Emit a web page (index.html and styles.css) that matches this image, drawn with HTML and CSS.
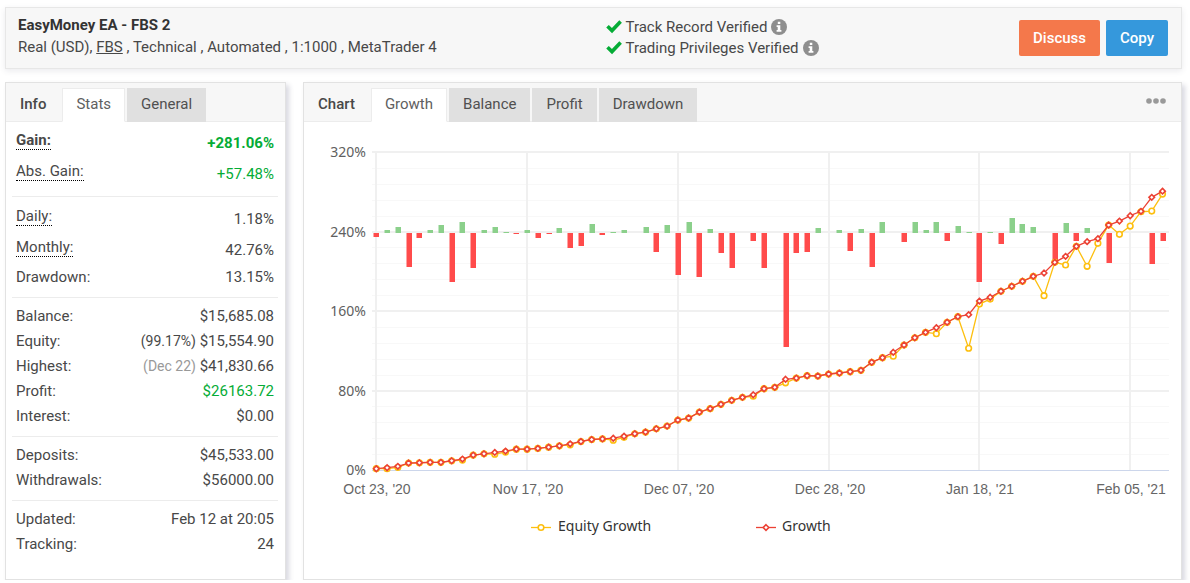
FILE: index.html
```html
<!DOCTYPE html>
<html lang="en">
<head>
<meta charset="utf-8">
<meta name="viewport" content="width=device-width, initial-scale=1">
<title>EasyMoney EA - FBS 2</title>
<link rel="stylesheet" href="styles.css">
</head>
<body>
<header class="account">
  <div class="account-info">
    <h1 class="account-name">EasyMoney EA - FBS 2</h1>
    <p class="account-meta">Real (USD), <a class="broker" href="#">FBS</a> , Technical , Automated , 1:1000 , MetaTrader 4</p>
  </div>
  <div class="account-side">
    <ul class="verified">
      <li class="verified-item">
        <svg class="check" viewBox="0 0 16 14" aria-hidden="true"><path d="M1.5 6.2 6 10.6 14.6 1.6" /></svg>
        <span>Track Record Verified</span>
        <svg class="info" viewBox="0 0 16 16" aria-hidden="true"><circle cx="8" cy="8" r="8" /><path d="M6.8 2.7h2.5v2.2H6.8zM5.6 6.3h3.7V11h1.1v1.7H5.6V11h1.1V8H5.6z" /></svg>
      </li>
      <li class="verified-item">
        <svg class="check" viewBox="0 0 16 14" aria-hidden="true"><path d="M1.5 6.2 6 10.6 14.6 1.6" /></svg>
        <span>Trading Privileges Verified</span>
        <svg class="info" viewBox="0 0 16 16" aria-hidden="true"><circle cx="8" cy="8" r="8" /><path d="M6.8 2.7h2.5v2.2H6.8zM5.6 6.3h3.7V11h1.1v1.7H5.6V11h1.1V8H5.6z" /></svg>
      </li>
    </ul>
    <div class="actions">
      <button class="btn btn-discuss" type="button">Discuss</button>
      <button class="btn btn-copy" type="button">Copy</button>
    </div>
  </div>
</header>

<main class="panels">
  <section class="panel">
    <div class="panel-head">
      <h2 class="panel-title">Info</h2>
      <div class="tabs" role="tablist">
        <button class="tab tab-active" type="button" role="tab" aria-selected="true">Stats</button>
        <button class="tab" type="button" role="tab" aria-selected="false">General</button>
      </div>
    </div>
    <div class="stats">
      <dl class="group">
        <div class="row row-tall strong"><dt class="tip">Gain:</dt><dd class="up">+281.06%</dd></div>
        <div class="row row-tall"><dt class="tip">Abs. Gain:</dt><dd class="up">+57.48%</dd></div>
      </dl>
      <dl class="group">
        <div class="row row-tall"><dt class="tip">Daily:</dt><dd>1.18%</dd></div>
        <div class="row row-tall"><dt class="tip">Monthly:</dt><dd>42.76%</dd></div>
        <div class="row"><dt>Drawdown:</dt><dd>13.15%</dd></div>
      </dl>
      <dl class="group">
        <div class="row"><dt>Balance:</dt><dd>$15,685.08</dd></div>
        <div class="row"><dt>Equity:</dt><dd><span class="note">(99.17%)</span> $15,554.90</dd></div>
        <div class="row"><dt>Highest:</dt><dd><span class="note muted">(Dec 22)</span> $41,830.66</dd></div>
        <div class="row"><dt>Profit:</dt><dd class="up">$26163.72</dd></div>
        <div class="row"><dt>Interest:</dt><dd>$0.00</dd></div>
      </dl>
      <dl class="group">
        <div class="row"><dt>Deposits:</dt><dd>$45,533.00</dd></div>
        <div class="row"><dt>Withdrawals:</dt><dd>$56000.00</dd></div>
      </dl>
      <dl class="group">
        <div class="row"><dt>Updated:</dt><dd>Feb 12 at 20:05</dd></div>
        <div class="row"><dt>Tracking:</dt><dd>24</dd></div>
      </dl>
    </div>
  </section>

  <section class="panel">
    <div class="panel-head">
      <h2 class="panel-title">Chart</h2>
      <div class="tabs" role="tablist">
        <button class="tab tab-active" type="button" role="tab" aria-selected="true">Growth</button>
        <button class="tab" type="button" role="tab" aria-selected="false">Balance</button>
        <button class="tab" type="button" role="tab" aria-selected="false">Profit</button>
        <button class="tab" type="button" role="tab" aria-selected="false">Drawdown</button>
      </div>
      <button class="more" type="button" aria-label="More options">
        <svg class="more-icon" viewBox="0 0 20 6" aria-hidden="true"><circle cx="3" cy="3" r="2.8" /><circle cx="10" cy="3" r="2.8" /><circle cx="17" cy="3" r="2.8" /></svg>
      </button>
    </div>
    <svg class="chart" id="chart" viewBox="0 0 877 457" role="img" aria-label="Growth chart"></svg>
  </section>
</main>
<script src="chart.js"></script>
</body>
</html>
```

FILE: styles.css
```css
* {
  box-sizing: border-box;
}

body {
  margin: 0;
  padding: 7px 8px 0 5px;
  background: #fff;
  color: #484848;
  font-family: Roboto, "Liberation Sans", sans-serif;
  font-size: 15px;
}

h1, h2, p, ul, dl, dd {
  margin: 0;
  padding: 0;
}

button {
  border: 0;
  font: inherit;
  cursor: pointer;
}

.account {
  display: grid;
  grid-template-columns: 1fr 1fr;
  column-gap: 25px;
  padding: 7px 13px 8px 12px;
  border: 1px solid #e7e7e7;
  background: #f7f7f7;
  box-shadow: 0 2px 6px rgba(60, 60, 90, 0.1);
}

.account-name {
  font-size: 15px;
  font-weight: 700;
  line-height: 20px;
  color: #333;
}

.account-meta {
  line-height: 25px;
}

.broker {
  color: inherit;
}

.account-side {
  display: flex;
  justify-content: space-between;
  align-items: center;
}

.verified {
  list-style: none;
}

.verified-item {
  display: flex;
  align-items: center;
  gap: 4px;
  line-height: 21px;
}

.check {
  width: 16px;
  height: 14px;
  fill: none;
  stroke: #05ac36;
  stroke-width: 3.6;
}

.info {
  width: 16px;
  height: 16px;
}

.info circle {
  fill: #8e8e8e;
}

.info path {
  fill: #fff;
}

.actions {
  display: flex;
  gap: 6px;
}

.btn {
  height: 36px;
  padding: 0 14px;
  border-radius: 2px;
  color: #fff;
  font-weight: 500;
}

.btn-discuss {
  background: #f4784b;
}

.btn-copy {
  background: #3598dc;
}

.panels {
  display: grid;
  grid-template-columns: 281px 1fr;
  gap: 17px;
  margin-top: 13px;
}

.panel {
  min-width: 0;
  border: 1px solid #e2e2e2;
  background: #fff;
  box-shadow: 3px 3px 5px rgba(60, 60, 100, 0.2);
}

.panel-head {
  display: flex;
  height: 39px;
  padding: 5px 15px 0 14px;
  border-bottom: 1px solid #ececec;
  background: #f7f7f7;
}

.panel-title {
  margin-right: 16px;
  font-size: 15px;
  font-weight: 500;
  line-height: 33px;
}

.tabs {
  display: flex;
  gap: 2px;
}

.tab {
  height: 34px;
  padding: 0 13px 2px 13px;
  border: 1px solid #e0e0e0;
  background: #e0e0e0;
  color: #505050;
}

.tab-active {
  border-color: #ececec;
  border-bottom-color: #fff;
  background: #fff;
  color: #606060;
}

.more {
  margin-left: auto;
  padding: 0;
  height: 26px;
  background: none;
}

.more-icon {
  display: block;
  width: 20px;
  height: 6px;
  fill: #999;
}

.stats {
  padding: 0 7px 0 6px;
}

.group {
  padding: 6px 4px 7px 4px;
}

.group:first-child {
  padding-top: 5px;
}

.group + .group {
  border-top: 1px solid #ececec;
}

.row {
  display: flex;
  justify-content: space-between;
  align-items: flex-start;
  line-height: 25px;
}

.row-tall {
  line-height: 32px;
  height: 31px;
}

.tip {
  margin-top: 4px;
  border-bottom: 1px dotted #000;
  line-height: 18px;
}

.strong {
  font-weight: 700;
}

.up {
  color: #05ac36;
}

.note {
  font-size: 14px;
}

.muted {
  color: #999;
}

.chart {
  display: block;
  width: 100%;
  height: auto;
}

.grid-minor {
  stroke: #f8f8f8;
}

.grid-major {
  stroke: #f0f0f0;
  stroke-width: 2;
}

.axis {
  stroke: #ccd6eb;
}

.bar-up {
  fill: #8bd08b;
}

.bar-down {
  fill: #ff4b4b;
}

.line {
  fill: none;
  stroke-width: 1.3;
}

.marker {
  fill: #fff;
  stroke-width: 1.6;
}

.equity {
  stroke: #fdbf0f;
}

.growth {
  stroke: #ec4134;
}

.label-y {
  fill: #606060;
  font: 14px "Noto Sans", sans-serif;
  text-anchor: end;
}

.label-x {
  fill: #666;
  font: 14px "Liberation Sans", sans-serif;
  text-anchor: middle;
}

.legend {
  fill: #333;
  font: 14px "Noto Sans", sans-serif;
}
```

FILE: chart.js
```javascript
// Trading-day series, in percent.
const growth = [
  1.8, 2.8, 4.2, 7.5, 7.8, 8.2, 8.2, 9.8, 11.5, 15.5,
  16.8, 18.2, 19.5, 21.5, 21.5, 22.2, 23.5, 24.8, 26.8, 29.2,
  31.2, 31.8, 32.5, 34.5, 37, 38.7, 42, 44.7, 50.8, 52.8,
  58.8, 62.2, 66.6, 70.6, 73.6, 76.2, 82.3, 83.7, 91.8, 93,
  95.4, 95.1, 97.1, 98.1, 99.4, 100.8, 108.9, 113.5, 119, 126.3,
  133.6, 139, 143.7, 149.2, 154.8, 156.8, 170.5, 174.3, 180.4, 185.4,
  190.4, 195.4, 198.7, 209.5, 215.5, 225.6, 230.3, 233.3, 247, 251,
  256.4, 260.8, 274.9, 281.1
];

// Days on which equity differed from the closed balance.
const equityAt = {
  1: 1.8, 2: 3.2, 8: 10.5, 11: 16.4, 12: 18.5, 18: 25.8, 22: 30.5, 23: 33.4,
  35: 74.7, 38: 88.2, 48: 115, 52: 137.7, 55: 123, 56: 167.5, 57: 172.5,
  62: 175.9, 64: 206.8, 66: 205.5, 67: 228.6, 69: 237.7, 70: 246,
  71: 260.4, 72: 261.1, 73: 278.2
};
const equity = growth.map((v, i) => equityAt[i] ?? v);

// Daily result bars, measured from the middle line.
const daily = [
  -4, 3, 6, -34, -5, 3, 8, -49, 11, -35, 3, 6, 1, -1, 3, -5, -1, 5, -15, -13,
  9, -2, 1, 3, 0, 6, -19, 8, -42, 11, -44, 4, -20, -35, 0, -8, -35, 0, -114, -20,
  -19, 5, 0, 3, -18, 4, -34, 11, 0, -9, 11, 3, 11, -8, 7, 1, -49, 1, -11, 15,
  9, 6, 0, -29, 10, -8, 5, 0, -30, 0, 0, 0, -31, -8
];

const dates = ["Oct 23, '20", "Nov 17, '20", "Dec 07, '20", "Dec 28, '20", "Jan 18, '21", "Feb 05, '21"];

const plot = { left: 68, right: 865, top: 30, bottom: 348, zero: 111 };
const x = i => 72.3 + i * 10.77;
const y = v => plot.bottom + 0.5 - v * (plot.bottom - plot.top) / 320;

const svg = document.getElementById("chart");

function add(tag, cls, attrs, text) {
  const el = document.createElementNS("http://www.w3.org/2000/svg", tag);
  el.setAttribute("class", cls);
  for (const key in attrs) el.setAttribute(key, attrs[key]);
  if (text) el.textContent = text;
  svg.appendChild(el);
}

function hline(cls, py) {
  add("line", cls, { x1: plot.left, x2: plot.right, y1: py, y2: py });
}

function circle(cx, cy) {
  add("circle", "marker equity", { cx, cy, r: 2.8 });
}

function diamond(cx, cy) {
  add("path", "marker growth", { d: `M${cx} ${cy - 2.8}l2.8 2.8-2.8 2.8-2.8-2.8z` });
}

// Grid and axis labels
for (let v = 16; v < 320; v += 16) {
  if (v % 80) hline("grid-minor", Math.floor(y(v)) + 0.5);
}
dates.forEach((text, k) => {
  const px = Math.round(x(k * 14));
  add("line", "grid-major", { x1: px, x2: px, y1: plot.top, y2: plot.bottom });
  add("text", "label-x", { x: px + 1, y: 372 }, text);
});
for (let v = 0; v <= 320; v += 80) {
  if (v) hline("grid-major", Math.floor(y(v)));
  add("text", "label-y", { x: 62, y: Math.floor(y(v)) + 5 }, v + "%");
}
hline("axis", plot.bottom + 0.5);

// Daily bars
daily.forEach((d, i) => {
  if (!d) return;
  add("rect", d > 0 ? "bar-up" : "bar-down", {
    x: Math.round(x(i)) - 2.5,
    y: d > 0 ? plot.zero - d : plot.zero,
    width: 5.5,
    height: Math.abs(d)
  });
});

// Lines with markers
const points = s => s.map((v, i) => x(i) + "," + y(v)).join(" ");
add("polyline", "line equity", { points: points(equity) });
equity.forEach((v, i) => circle(x(i), y(v)));
add("polyline", "line growth", { points: points(growth) });
growth.forEach((v, i) => diamond(x(i), y(v)));

// Legend
add("line", "line equity", { x1: 227, x2: 247, y1: 405.5, y2: 405.5 });
circle(237, 405.5);
add("text", "legend", { x: 254, y: 409 }, "Equity Growth");
add("line", "line growth", { x1: 452, x2: 472, y1: 405.5, y2: 405.5 });
diamond(462, 405.5);
add("text", "legend", { x: 478, y: 409 }, "Growth");
```
